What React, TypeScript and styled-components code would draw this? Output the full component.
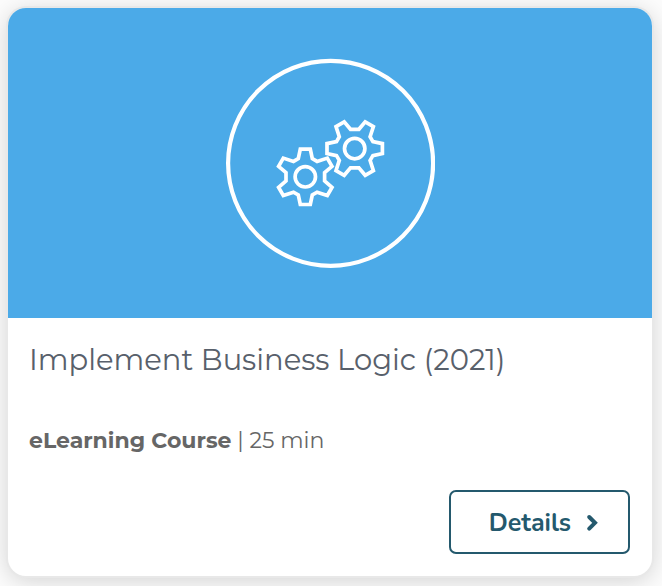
import React from "react";
import styled, { createGlobalStyle } from "styled-components";

const GlobalStyle = createGlobalStyle`
  *, *::before, *::after { box-sizing: border-box; }
  body {
    margin: 0;
    background: #fcfcfc;
    font-family: Montserrat, Inter, sans-serif;
  }
`;

const Page = styled.main`
  padding: 8px 10px 10px 8px;
`;

const Card = styled.article`
  overflow: hidden;
  border-radius: 18px;
  background: #fff;
  box-shadow: 0 0 0 2px #e8e8e8, 0 4px 24px rgba(0, 0, 0, 0.18);
`;

const Banner = styled.div`
  display: flex;
  align-items: center;
  justify-content: center;
  height: 310px;
  background: #4baae8;
`;

const Body = styled.div`
  display: flex;
  flex-direction: column;
  padding: 22px 22px 22px 21px;
`;

const Title = styled.h2`
  margin: 0 0 44px;
  color: #58606b;
  font-size: 29px;
  font-weight: 400;
  line-height: 40px;
`;

const Meta = styled.p`
  margin: 0 0 32px;
  color: #666;
  font-size: 22px;
  line-height: 34px;
`;

const Kind = styled.strong`
  font-weight: 700;
`;

const DetailsButton = styled.button`
  display: flex;
  align-items: center;
  justify-content: center;
  align-self: flex-end;
  gap: 15px;
  height: 64px;
  padding: 2px 30px 0 38px;
  border: 2px solid #24596d;
  border-radius: 7px;
  background: #fff;
  color: #24596d;
  font-family: Nunito, "Open Sans", sans-serif;
  font-size: 25px;
  font-weight: 700;
  cursor: pointer;
`;

const GEAR =
  "M-5-27.7H5L7-18.2 11.8-15.4 22-18.7 26.7-10.5 19.3-4.2V4.2L26.7 10.5 22 18.7 11.8 15.4 7 18.2 5 27.7H-5L-7 18.2-11.8 15.4-22 18.7-26.7 10.5-19.3 4.2V-4.2L-26.7-10.5-22-18.7-11.8-15.4-7-18.2Z";

function Gear({ transform }: { transform: string }) {
  return (
    <g transform={transform}>
      <path d={GEAR} />
      <circle r="10.2" />
    </g>
  );
}

function GearsIcon() {
  return (
    <svg width="210" height="210" viewBox="0 0 210 210" fill="none" stroke="#fff" strokeWidth="3.7" aria-hidden="true">
      <circle cx="105.6" cy="105.3" r="102.5" strokeWidth="4.2" />
      <Gear transform="translate(80.3 118.8)" />
      <Gear transform="translate(129.7 90.6) rotate(90)" />
    </svg>
  );
}

function Chevron() {
  return (
    <svg
      width="12"
      height="18"
      viewBox="0 0 12 18"
      fill="none"
      stroke="currentColor"
      strokeWidth="4"
      strokeLinecap="round"
      aria-hidden="true"
    >
      <path d="M3.2 3 9 8.8 3.2 14.6" />
    </svg>
  );
}

export default function App() {
  return (
    <>
      <GlobalStyle />
      <Page>
        <Card>
          <Banner>
            <GearsIcon />
          </Banner>
          <Body>
            <Title>Implement Business Logic (2021)</Title>
            <Meta>
              <Kind>eLearning Course</Kind> | 25 min
            </Meta>
            <DetailsButton type="button">
              Details
              <Chevron />
            </DetailsButton>
          </Body>
        </Card>
      </Page>
    </>
  );
}
